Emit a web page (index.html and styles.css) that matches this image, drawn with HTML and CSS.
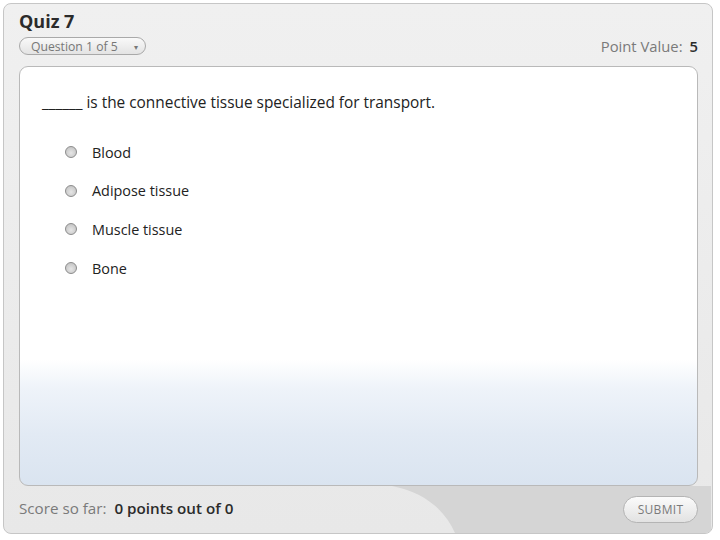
FILE: index.html
```html
<!DOCTYPE html>
<html>
<head>
<meta charset="utf-8">
<link rel="stylesheet" href="styles.css">
</head>
<body>
<div class="panel">
  <header class="head">
    <h1 class="title">Quiz 7</h1>
    <div class="head-row">
      <div class="select"><span>Question 1 of 5</span><span class="arrow">▾</span></div>
      <div class="points"><span class="label">Point Value:</span><span class="val">5</span></div>
    </div>
  </header>
  <main class="card">
    <p class="question">______ is the connective tissue specialized for transport.</p>
    <ul class="options">
      <li class="option"><span class="radio"></span><span>Blood</span></li>
      <li class="option"><span class="radio"></span><span>Adipose tissue</span></li>
      <li class="option"><span class="radio"></span><span>Muscle tissue</span></li>
      <li class="option"><span class="radio"></span><span>Bone</span></li>
    </ul>
  </main>
  <footer class="foot">
    <svg class="swoosh" width="707" height="47" viewBox="0 0 707 47" aria-hidden="true"><path d="M388,0 C420,6 441,24 451,47 L707,47 L707,0 Z" fill="#d5d5d5"/></svg>
    <div class="score"><span class="label">Score so far:</span><span class="val">0 points out of 0</span></div>
    <button class="submit">SUBMIT</button>
  </footer>
</div>
</body>
</html>
```
FILE: styles.css
```css
html, body {
  margin: 0;
  padding: 0;
  background: #ffffff;
}
body {
  font-family: "Open Sans", "Noto Sans", sans-serif;
  color: #222;
}
.panel {
  box-sizing: border-box;
  margin: 3px 0 0 3px;
  width: 710px;
  height: 531px;
  border: 1px solid #c6c6c6;
  border-radius: 8px;
  background: linear-gradient(to bottom, #f0f0f0 0%, #e8e8e8 100%);
  display: flex;
  flex-direction: column;
  overflow: hidden;
}
.head {
  padding: 5px 14px 0 15px;
  height: 57px;
}
.title {
  margin: 0;
  font-size: 18px;
  line-height: 24px;
  font-weight: 700;
  color: #2b2b2b;
}
.head-row {
  margin-top: 3px;
  display: flex;
  justify-content: space-between;
  align-items: center;
}
.select {
  box-sizing: border-box;
  width: 127px;
  height: 18px;
  border: 1px solid #a9a9a9;
  border-radius: 9px;
  background: linear-gradient(to bottom, #f9f9f9, #e3e3e3);
  display: flex;
  align-items: center;
  padding: 0 0 0 11px;
  font-size: 12.2px;
  color: #777;
}
.select .arrow {
  margin-left: auto;
  margin-right: 7px;
  font-size: 8px;
  color: #777;
}
.points {
  font-size: 14.8px;
  display: flex;
  gap: 7px;
  padding-right: 0;
}
.label { color: #7a7a7a; }
.val { color: #2b2b2b; font-weight: 600; }
.card {
  box-sizing: border-box;
  margin: 0 14px 0 15px;
  height: 420px;
  border: 1px solid #b9b9b9;
  border-radius: 9px;
  background: linear-gradient(to bottom, #ffffff 0%, #ffffff 70%, #eef3f9 77%, #e2eaf4 88%, #dae4f0 100%);
  padding: 24px 0 0 22px;
}
.question {
  margin: 0;
  font-size: 15.4px;
  line-height: 24px;
  color: #222;
}
.options {
  list-style: none;
  margin: 27px 0 0 0;
  padding: 0 0 0 23px;
  display: flex;
  flex-direction: column;
  gap: 18.7px;
}
.option {
  display: flex;
  align-items: center;
  height: 20px;
  font-size: 14.4px;
  color: #222;
}
.radio {
  box-sizing: border-box;
  width: 12px;
  height: 12px;
  border-radius: 50%;
  border: 1px solid #8c8c8c;
  background: radial-gradient(circle at 50% 60%, #e6e6e6 0%, #cfcfcf 55%, #bdbdbd 100%);
  margin-right: 15px;
}
.foot {
  position: relative;
  flex: 1;
  display: flex;
  align-items: center;
  justify-content: space-between;
  padding: 0 14px 0 15px;
}
.swoosh {
  position: absolute;
  left: 0;
  top: 0;
}
.score {
  position: relative;
  font-size: 15.2px;
  display: flex;
  gap: 8px;
  margin-top: -3px;
}
.score .val { font-weight: 600; }
.submit {
  position: relative;
  box-sizing: border-box;
  width: 75px;
  height: 27px;
  border: 1px solid #b4b4b4;
  border-radius: 14px;
  background: linear-gradient(to bottom, #fbfbfb, #e2e2e2);
  font-family: "Open Sans", "Noto Sans", sans-serif;
  font-size: 12px;
  color: #7a7a7a;
  letter-spacing: 0.3px;
  padding: 0;
  margin-top: -1px;
}
```
